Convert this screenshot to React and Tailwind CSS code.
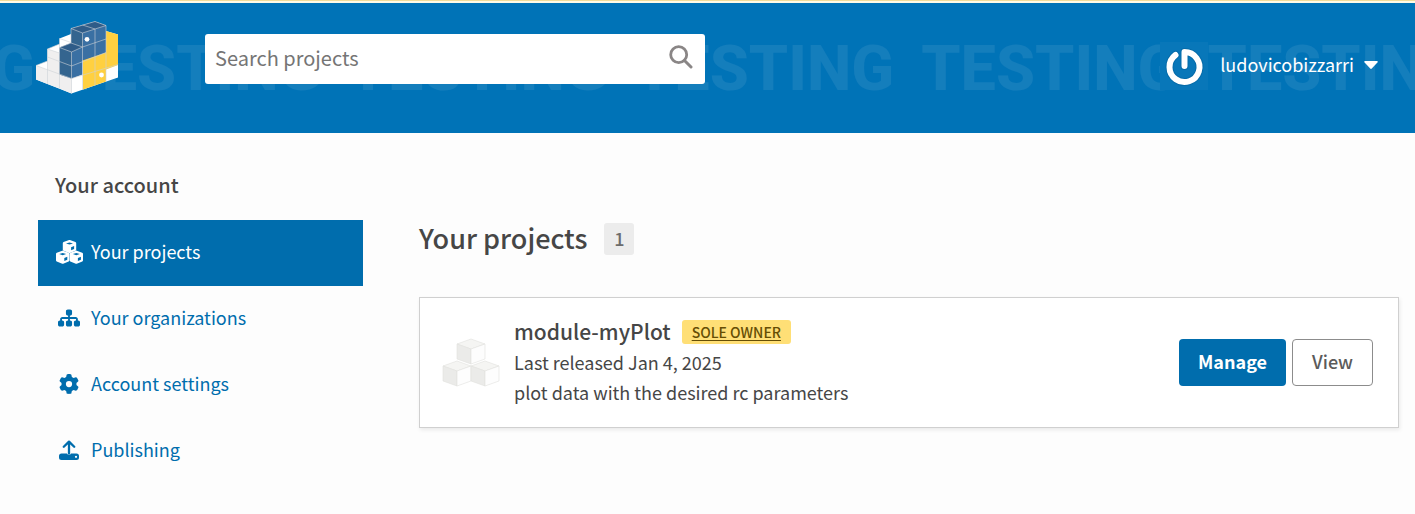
import { FaSitemap, FaGear } from "react-icons/fa6";

const watermarkWords = ["first", "second", "third", "fourth", "fifth", "sixth"];

function Watermark() {
  return (
    <div
      aria-hidden="true"
      className="pointer-events-none absolute inset-0 flex items-center gap-[27px] overflow-hidden font-['Roboto',sans-serif] text-[63px] leading-none font-extrabold whitespace-nowrap text-white/8 select-none"
    >
      {watermarkWords.map((word) => (
        <span key={word} className="shrink-0 first:-ml-56">
          TESTING
        </span>
      ))}
    </div>
  );
}

function Logo() {
  return (
    <svg viewBox="0 0 84 74" className="h-[74px] w-[84px]" aria-hidden="true">
      <path d="M0 44.500 11.500 40V28L23.500 23V17.500L35 13V7.500L59 .5 70 4.500V10L82 13.500V56.500L35.500 72.500 0 58.500Z" fill="#fff" />
      <path d="M0 44.500 11.500 49V63L0 58.500ZM11.500 28 23.500 32V67.500L11.500 63ZM23.500 53.500 35.500 57.500V72.500L23.500 67.500Z" fill="#f0efef" />
      <path d="M70 10 82 13.500V44L70 48.500V60.500L47 68.500V38.500L70 31Z" fill="#ffd040" />
      <path d="M23.500 26.500 35 22V7.500L59 .5 70 4.500V31.500L46.500 39.500V53.500L35.500 57.500 23.500 53.500Z" fill="#3a70a3" />
      <path d="M23.500 26.500 35.500 31V57.500L23.500 53.500ZM35 7.500 46.500 12V26L35 22Z" fill="#34658f" />
      <path d="M23.500 26.500 35 22 46.500 26 35.500 31ZM35 7.500 59 .5 70 4.500 46.500 12Z" fill="#2f5c88" />
      <path
        d="M0 44.500 35.500 57.500 82 43.500M0 44.500 11.500 40M11.500 28 23.500 32M11.500 28 23.500 23M11.500 36 23.500 40.500 35.500 45 70 31.500M11.500 28V63M23.500 17.500 35 21.500M23.500 17.500V67.500M23.500 26.500 35.500 31 46.500 26 35 22ZM35 7.500 46.500 12 70 4.500 59 .5ZM46.500 4 59 8M35.500 31V72.500M35 7.500V22M46.500 12V68.500M59 8V64.500M70 4.500V60.500M46.500 26 70 18"
        fill="none"
        stroke="#ccd2d6"
        strokeWidth=".6"
      />
      <circle cx="51" cy="18.300" r="2.400" fill="#fff" />
      <circle cx="65.500" cy="54" r="2.400" fill="#fff" />
    </svg>
  );
}

function Avatar() {
  return (
    <svg viewBox="0 0 48 48" className="h-12 w-12 bg-[#0877b9]" aria-hidden="true">
      <path
        d="M15.500 13A15 15 0 1 0 24.500 10V24"
        fill="none"
        stroke="#00558c"
        strokeOpacity=".35"
        strokeWidth="8"
        strokeLinecap="round"
        strokeLinejoin="round"
      />
      <path
        d="M15.500 13A15 15 0 1 0 24.500 10V24"
        fill="none"
        stroke="#fff"
        strokeWidth="6"
        strokeLinecap="round"
        strokeLinejoin="round"
      />
    </svg>
  );
}

function SearchIcon() {
  return (
    <svg viewBox="0 0 24 24" className="h-6 w-6" fill="none" stroke="currentColor" aria-hidden="true">
      <circle cx="9.700" cy="9.700" r="8" strokeWidth="2.800" />
      <path d="M15.500 15.500 22 22" strokeWidth="3" strokeLinecap="round" />
    </svg>
  );
}

function Cube({ x, y }) {
  return (
    <g transform={`translate(${x} ${y})`} stroke="#e0e0dd" strokeWidth=".6" strokeLinejoin="round">
      <path d="M0 5 14 0 28 5 14 10Z" fill="#f5f5f3" />
      <path d="M0 5 14 10V25L0 20Z" fill="#ebebe9" />
      <path d="M14 10 28 5V20L14 25Z" fill="#fdfdfd" />
    </g>
  );
}

function PackageIcon() {
  return (
    <svg viewBox="0 0 58 50" className="h-[50px] w-[58px] shrink-0" aria-hidden="true">
      <Cube x={15} y={1} />
      <Cube x={1} y={23} />
      <Cube x={29} y={23} />
    </svg>
  );
}

function SolidCube({ x, y }) {
  return (
    <g transform={`translate(${x} ${y})`}>
      <path
        d="M6.700 1.200 12.200 3.200V9.700L6.700 12 1.200 9.700V3.200Z"
        fill="#fff"
        stroke="#fff"
        strokeWidth="2.400"
        strokeLinejoin="round"
      />
      <path d="M3.200 3.500 6.700 2.500 10.200 3.500 6.700 4.600Z" fill="#006dad" />
      <path d="M8.300 7.300 11.300 6.100V9.100L8.300 10.300Z" fill="#006dad" />
    </g>
  );
}

function CubesIcon() {
  return (
    <svg viewBox="0 0 27 24" className="h-6 w-[27px]" aria-hidden="true">
      <SolidCube x={6.8} y={0} />
      <SolidCube x={0} y={10.6} />
      <SolidCube x={13.6} y={10.6} />
    </svg>
  );
}

function UploadIcon() {
  return (
    <svg viewBox="0 0 20 20" className="h-5 w-5" aria-hidden="true">
      <path d="M10 13.500V2M4.800 6.800 10 1.600 15.200 6.800" fill="none" stroke="currentColor" strokeWidth="2.300" strokeLinecap="round" strokeLinejoin="round" />
      <path
        fillRule="evenodd"
        fill="currentColor"
        d="M2.500 13.500H8a2.200 2.200 0 0 0 4 0H17.500A2.500 2.500 0 0 1 20 16V17.500A2.500 2.500 0 0 1 17.500 20H2.500A2.500 2.500 0 0 1 0 17.500V16A2.500 2.500 0 0 1 2.500 13.500ZM17 15.700a1.100 1.100 0 1 0 .01 0Z"
      />
    </svg>
  );
}

const navItems = [
  { label: "Your projects", icon: <CubesIcon />, active: true },
  { label: "Your organizations", icon: <FaSitemap className="h-[22px] w-[22px]" /> },
  { label: "Account settings", icon: <FaGear className="h-5 w-5" /> },
  { label: "Publishing", icon: <UploadIcon /> },
];

export default function App() {
  return (
    <div className="min-h-screen bg-[#fdfdfd] font-['Noto_Sans_CJK_JP','Source_Sans_3',sans-serif] text-[#464646]">
      <div className="h-[3px] border-b-2 border-[#fffbe6] bg-[#f1dc9c]" />
      <header className="relative flex h-[130px] items-start bg-[#0073b7] pr-[37px] pl-9">
        <Watermark />
        <a href="#home" aria-label="Home" className="relative mt-[18px] block">
          <Logo />
        </a>
        <form role="search" className="relative mt-[31px] ml-[85px] flex h-[50px] w-[500px] items-center rounded-[3px] bg-white">
          <input
            type="search"
            aria-label="Search projects"
            placeholder="Search projects"
            className="h-full min-w-0 flex-1 bg-transparent px-[10px] pb-1 text-[20px] outline-none placeholder:text-[#757575]"
          />
          <button type="button" aria-label="Search" className="mr-3 mb-1 text-[#8a8686]">
            <SearchIcon />
          </button>
        </form>
        <button type="button" className="relative mt-[39px] ml-auto flex h-12 items-center gap-3 text-[18px] text-white">
          <Avatar />
          <span className="flex items-center gap-[10px] pb-1">
            ludovicobizzarri
            <svg viewBox="0 0 14 8" className="mt-[2px] h-2 w-[14px]" aria-hidden="true">
              <path d="M1 0H13Q14.300.3 13.400 1.400L7.800 7.500Q7 8.300 6.200 7.500L.6 1.400Q-.3.3 1 0Z" fill="currentColor" />
            </svg>
          </span>
        </button>
      </header>
      <div className="flex pr-4 pl-[38px]">
        <aside className="w-[325px] shrink-0 pt-[38px]">
          <h2 className="pl-[17px] text-[20px] leading-[27px] font-medium">Your account</h2>
          <nav className="mt-[22px]">
            <ul>
              {navItems.map((item) => (
                <li key={item.label}>
                  <a
                    href="#section"
                    className={
                      item.active
                        ? "flex h-[66px] items-center gap-2 bg-[#006dad] pl-[17px] text-[18px] text-white"
                        : "flex h-[66px] items-center gap-2 pl-[17px] text-[18px] text-[#006dad]"
                    }
                  >
                    <span className="flex w-7 justify-center pb-[2px]">{item.icon}</span>
                    <span className="pb-1">{item.label}</span>
                  </a>
                </li>
              ))}
            </ul>
          </nav>
        </aside>
        <main className="ml-14 min-w-0 flex-1 pt-[86px]">
          <div className="flex h-10 items-center gap-[17px]">
            <h1 className="pb-[2px] text-[27px] leading-10 font-medium">Your projects</h1>
            <span className="flex h-8 w-[30px] items-center justify-center rounded-[3px] bg-[#ececec] pb-[2px] text-[18px] font-medium text-[#6c6c6c]">
              1
            </span>
          </div>
          <article className="mt-[38px] flex h-[131px] items-center border border-[#d0d0d0] bg-white pr-[25px] pl-[22px] shadow-[1px_2px_4px_rgba(0,0,0,0.08)]">
            <PackageIcon />
            <div className="ml-[14px] min-w-0 flex-1 pb-1">
              <div className="flex items-center gap-[11px]">
                <h3 className="text-[21px] leading-8 font-medium">module-myPlot</h3>
                <a href="#owners" className="mt-[2px] rounded-[3px] bg-[#ffdf76] px-[10px] text-[14px] leading-6 font-medium text-[#664e04] underline underline-offset-2">
                  SOLE OWNER
                </a>
              </div>
              <p className="text-[18px] leading-[30px]">Last released Jan 4, 2025</p>
              <p className="text-[18px] leading-[30px]">plot data with the desired rc parameters</p>
            </div>
            <div className="flex gap-[6px] text-[18px]">
              <button type="button" className="h-[47px] rounded-[4px] bg-[#006dad] px-[19px] pb-[3px] font-bold text-white">
                Manage
              </button>
              <button type="button" className="h-[47px] rounded-[4px] border border-[#8c8c8c] bg-white px-[19px] pb-[3px] font-medium text-[#5b5b5b]">
                View
              </button>
            </div>
          </article>
        </main>
      </div>
    </div>
  );
}
